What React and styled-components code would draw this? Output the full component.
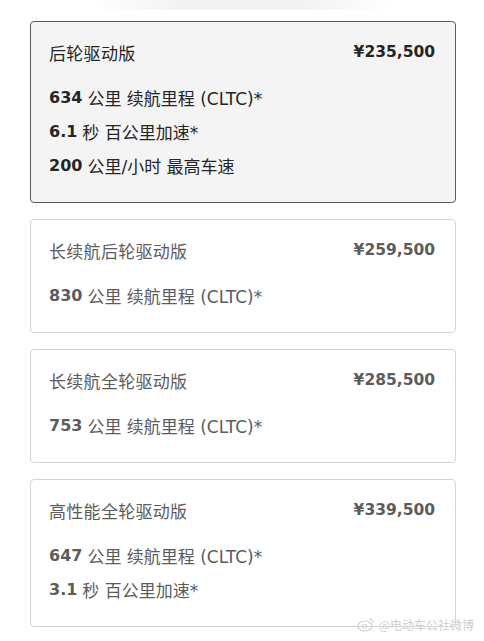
import React from "react";
import styled, { createGlobalStyle } from "styled-components";

const trims = [
  {
    name: "后轮驱动版",
    price: "¥235,500",
    selected: true,
    specs: [
      { value: "634", text: "公里 续航里程 (CLTC)*" },
      { value: "6.1", text: "秒 百公里加速*" },
      { value: "200", text: "公里/小时 最高车速" },
    ],
  },
  {
    name: "长续航后轮驱动版",
    price: "¥259,500",
    specs: [{ value: "830", text: "公里 续航里程 (CLTC)*" }],
  },
  {
    name: "长续航全轮驱动版",
    price: "¥285,500",
    specs: [{ value: "753", text: "公里 续航里程 (CLTC)*" }],
  },
  {
    name: "高性能全轮驱动版",
    price: "¥339,500",
    specs: [
      { value: "647", text: "公里 续航里程 (CLTC)*" },
      { value: "3.1", text: "秒 百公里加速*" },
    ],
  },
];

const GlobalStyle = createGlobalStyle`
  body {
    margin: 0;
    background: #ffffff;
    font-family: "DejaVu Sans", "Noto Sans CJK SC", sans-serif;
  }
`;

const Page = styled.div`
  position: relative;
  width: 484px;
  height: 641px;
  overflow: hidden;
  box-sizing: border-box;
  padding: 0 28px 0 30px;
`;

const Fade = styled.div`
  height: 10px;
  margin: 0 60px 11px;
  background: linear-gradient(
    to right,
    rgba(240, 240, 240, 0),
    #f3f3f3 30%,
    #f3f3f3 70%,
    rgba(240, 240, 240, 0)
  );
`;

const List = styled.div`
  display: flex;
  flex-direction: column;
  gap: 16px;
`;

const Card = styled.div`
  border: 1px solid ${(p) => (p.selected ? "#5a5a5a" : "#d4d4d4")};
  border-radius: 4px;
  background: ${(p) => (p.selected ? "#f4f4f4" : "#ffffff")};
  padding: 20px 20px 20px 18px;
  color: ${(p) => (p.selected ? "#252525" : "#5c5c5c")};
`;

const TitleRow = styled.div`
  display: flex;
  justify-content: space-between;
  align-items: center;
  height: 22px;
`;

const Name = styled.div`
  font-family: "Noto Sans CJK SC", sans-serif;
  font-size: 17px;
  letter-spacing: 0.3px;
  margin-top: -2px;
`;

const Price = styled.div`
  font-family: "DejaVu Sans", "Noto Sans CJK SC", sans-serif;
  font-size: 15.5px;
  font-weight: 700;
  margin-top: -3px;
`;

const Specs = styled.div`
  margin-top: 16px;
`;

const Spec = styled.div`
  height: 34px;
  display: flex;
  align-items: center;
  font-size: 17px;
  font-family: "DejaVu Sans", "Noto Sans CJK SC", sans-serif;
  white-space: pre;
`;

const Value = styled.span`
  font-size: 16px;
  font-weight: 700;
  margin-right: 5px;
`;

const Watermark = styled.div`
  position: absolute;
  right: 10px;
  bottom: 8px;
  display: flex;
  align-items: center;
  gap: 4px;
  font-family: "Noto Sans CJK SC", sans-serif;
  font-size: 12px;
  color: rgba(200, 200, 200, 0.9);
  text-shadow: 0 0 1px rgba(255, 255, 255, 0.8);
`;

const WeiboIcon = () => (
  <svg width="18" height="15" viewBox="0 0 18 15">
    <ellipse cx="8" cy="9" rx="7" ry="5" fill="none" stroke="#cfcfcf" strokeWidth="1.2" />
    <ellipse cx="7.5" cy="9.5" rx="2.5" ry="2" fill="none" stroke="#cfcfcf" strokeWidth="1" />
    <path d="M12 2 a4 4 0 0 1 4 4" fill="none" stroke="#cfcfcf" strokeWidth="1.2" />
  </svg>
);

export default function App() {
  return (
    <Page>
      <GlobalStyle />
      <Fade />
      <List>
        {trims.map((t) => (
          <Card key={t.name} selected={t.selected}>
            <TitleRow>
              <Name>{t.name}</Name>
              <Price>{t.price}</Price>
            </TitleRow>
            <Specs>
              {t.specs.map((s) => (
                <Spec key={s.value}>
                  <Value>{s.value}</Value>
                  {s.text}
                </Spec>
              ))}
            </Specs>
          </Card>
        ))}
      </List>
      <Watermark>
        <WeiboIcon />
        @电动车公社微博
      </Watermark>
    </Page>
  );
}
